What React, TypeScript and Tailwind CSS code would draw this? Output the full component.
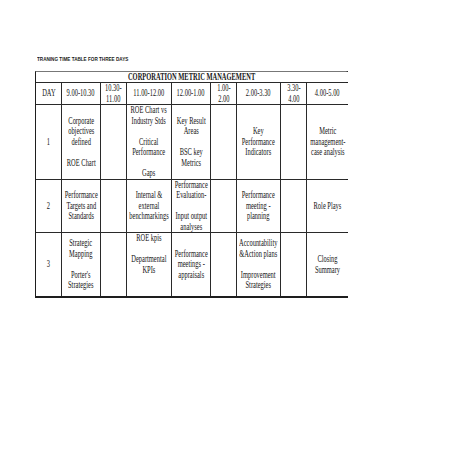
import React from "react";

const B = "\u00a0";

type Cell = string[];

const header: Cell[] = [
  ["DAY"],
  ["9.00-10.30"],
  ["10.30-", "11.00"],
  ["11.00-12.00"],
  ["12.00-1.00"],
  ["1.00-", "2.00"],
  ["2.00-3.30"],
  ["3.30-", "4.00"],
  ["4.00-5.00"],
];

const rows: Cell[][] = [
  [
    ["1"],
    ["Corporate", "objectives", "defined", B, "ROE Chart"],
    [],
    ["ROE Chart vs", "Industry Stds", B, "Critical", "Performance", B, "Gaps"],
    ["Key Result", "Areas", B, "BSC key", "Metrics"],
    [],
    ["Key", "Performance", "Indicators"],
    [],
    ["Metric", "management-", "case analysis"],
  ],
  [
    ["2"],
    ["Performance", "Targets and", "Standards"],
    [],
    ["Internal &", "external", "benchmarkings"],
    ["Performance", "Evaluation-", B, "Input output", "analyses"],
    [],
    ["Performance", "meeting -", "planning"],
    [],
    ["Role Plays"],
  ],
  [
    ["3"],
    ["Strategic", "Mapping", B, "Porter's", "Strategies"],
    [],
    ["ROE kpis", B, "Departmental", "KPIs", B, B],
    ["Performance", "meetings -", "appraisals"],
    [],
    ["Accountability", "&Action plans", B, "Improvement", "Strategies"],
    [],
    ["Closing", "Summary"],
  ],
];

function TCell({ lines, head }: { lines: Cell; head?: boolean }) {
  return (
    <div className="bg-white flex items-center justify-center overflow-visible">
      {lines.length > 0 && (
        <div
          className={
            "whitespace-nowrap text-center text-[9.5px] text-[#141414] scale-x-[0.68] [font-family:'Liberation_Serif','Times_New_Roman',serif] " +
            (head ? "leading-[11px]" : "leading-[10.5px]")
          }
        >
          {lines.map((l, i) => (
            <div key={i}>{l}</div>
          ))}
        </div>
      )}
    </div>
  );
}

export default function App() {
  return (
    <div className="w-[453px] h-[453px] bg-white pl-[35px] pt-[56px]">
      <div className="pl-[2px] h-[6px] flex items-center">
        <div className="whitespace-nowrap origin-left scale-x-[0.84] text-[5.5px] leading-[6px] font-bold text-[#1a1a1a] [font-family:'Liberation_Sans',Arial,sans-serif]">
          TRANING TIME TABLE FOR THREE DAYS
        </div>
      </div>
      <div className="mt-[9px] w-[313px] border border-r-2 border-b-2 border-[#1e1e1e] border-t-[#777] bg-[#2a2a2a]">
        <div className="grid gap-px grid-cols-[25px_38px_25px_44px_38px_25px_43px_25px_41px] grid-rows-[10px_21px_74px_52px_63px]">
          <div className="col-span-9 bg-white flex items-end justify-center">
            <div className="whitespace-nowrap text-[9.5px] leading-[9px] font-bold text-[#141414] scale-x-[0.68] [font-family:'Liberation_Serif','Times_New_Roman',serif]">
              CORPORATION METRIC MANAGEMENT
            </div>
          </div>
          {header.map((c, i) => (
            <TCell key={"h" + i} lines={c} head />
          ))}
          {rows.map((r, ri) =>
            r.map((c, ci) => <TCell key={ri + "-" + ci} lines={c} />)
          )}
        </div>
      </div>
    </div>
  );
}
